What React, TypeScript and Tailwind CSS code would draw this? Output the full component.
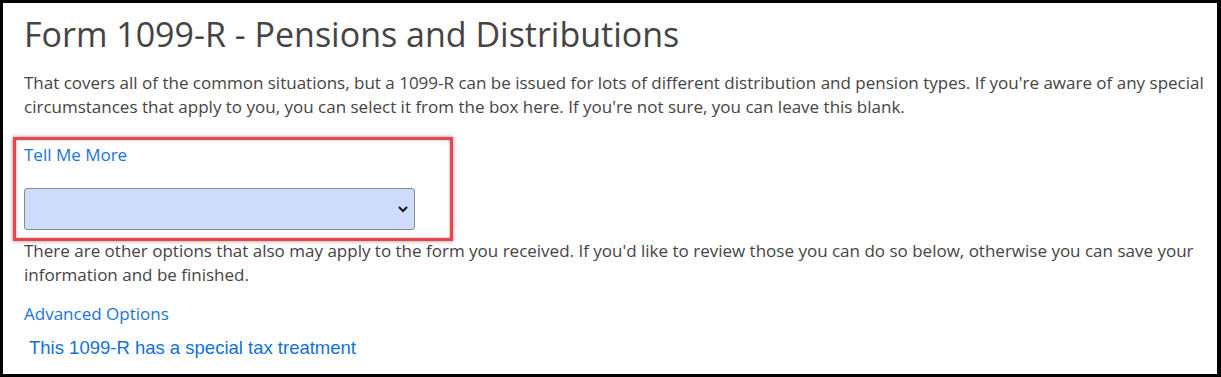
export default function App() {
  return (
    <div
      className="relative w-[1221px] h-[377px] bg-white border-l-[3px] border-t-[3px] border-r-4 border-b-[3px] border-black overflow-hidden"
      style={{ fontFamily: '"Open Sans", sans-serif' }}
    >
      <div className="pl-[21px] pr-[2px]">
        <h1 className="text-[34px] leading-[40px] text-[#444] mt-[11px]">
          Form 1099-R - Pensions and Distributions
        </h1>
        <p className="mt-[17px] text-[17px] leading-[24px] text-[#444]">
          That covers all of the common situations, but a 1099-R can be issued for lots of different distribution and pension types. If you're aware of any special circumstances that apply to you, you can select it from the box here. If you're not sure, you can leave this blank.
        </p>
        <a className="block mt-[24px] text-[17px] leading-[24px] text-[#1a73d9]">Tell Me More</a>
        <div className="mt-[21px] w-[391px] h-[42px] rounded-[3px] border border-[#8a8a8a] bg-[#cddcfa] flex items-center justify-end pr-[4px]">
          <svg width="14" height="14" viewBox="0 0 14 14">
            <path d="M3 5l4 4 4-4" fill="none" stroke="#111" strokeWidth="2" />
          </svg>
        </div>
        <p className="mt-[9px] pr-[14px] text-[17px] leading-[24px] text-[#444]">
          There are other options that also may apply to the form you received. If you'd like to review those you can do so below, otherwise you can save your information and be finished.
        </p>
        <a className="block mt-[15px] text-[17px] leading-[24px] text-[#1a73d9]">Advanced Options</a>
        <div
          className="mt-[10px] ml-[5px] text-[18.5px] leading-[24px] text-[#1271d6]"
          style={{ fontFamily: '"Liberation Sans", Arial, sans-serif' }}
        >
          This 1099-R has a special tax treatment
        </div>
      </div>
      <div className="absolute left-[10px] top-[134px] w-[440px] h-[104px] border-[3px] border-[#ee4449] shadow-[0_0_4px_rgba(0,0,0,0.45),inset_0_0_3px_rgba(0,0,0,0.35)]" />
    </div>
  );
}
